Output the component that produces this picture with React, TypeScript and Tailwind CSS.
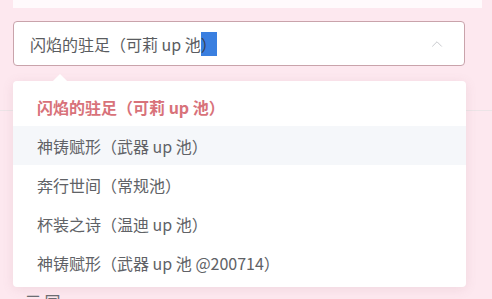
import React from "react";
import { ChevronUp } from "lucide-react";

const pools = [
  { id: 1, label: "闪焰的驻足（可莉 up 池）", selected: true },
  { id: 2, label: "神铸赋形（武器 up 池）", hover: true },
  { id: 3, label: "奔行世间（常规池）" },
  { id: 4, label: "杯装之诗（温迪 up 池）" },
  { id: 5, label: "神铸赋形（武器 up 池 @200714）" },
];

const App = () => {
  return (
    <div
      className="relative w-[492px] h-[299px] overflow-hidden bg-[#fde8ef]"
      style={{ fontFamily: '"Noto Sans CJK SC", "Noto Sans", sans-serif' }}
    >
      {/* card above, only its bottom edge shows */}
      <div className="ml-[13px] mr-[10px] h-[8px] bg-[#fffafc]" />

      {/* select input */}
      <div className="mt-[13px] ml-[13px] w-[452px] h-[45px] flex items-center justify-between px-[16px] bg-white border border-[#c9a3ab] rounded-[4px]">
        <span className="text-[16px] text-[#5a5c60] leading-none">
          闪焰的驻足（可莉 up 池<span className="bg-[#3a7fe0] text-[#3b3f55]">）</span>
        </span>
        <ChevronUp className="w-[18px] h-[18px] text-[#c6c8cd] mr-[2px]" strokeWidth={1.3} />
      </div>

      {/* content under the popover */}
      <div className="mt-[44px] border-t border-[#ece4e7]" />
      <div className="mt-[182px] ml-[25px] text-[16px] text-[#6b6d72] leading-none">三 国</div>

      {/* dropdown popover */}
      <div className="absolute left-[13px] top-[81px] w-[453px] h-[206px] bg-white rounded-[4px] shadow-[0_2px_12px_rgba(150,90,110,0.12)] py-[6px]">
        <div className="absolute -top-[5px] left-[42px] w-[10px] h-[10px] bg-white rotate-45" />
        {pools.map((pool) => (
          <div
            key={pool.id}
            className={`relative h-[39px] flex items-center pl-[24px] text-[16px] ${
              pool.selected
                ? "font-bold text-[#d8727a]"
                : pool.hover
                ? "bg-[#f5f7fa] text-[#606266]"
                : "text-[#606266]"
            }`}
          >
            {pool.label}
          </div>
        ))}
      </div>
    </div>
  );
};

export default App;
